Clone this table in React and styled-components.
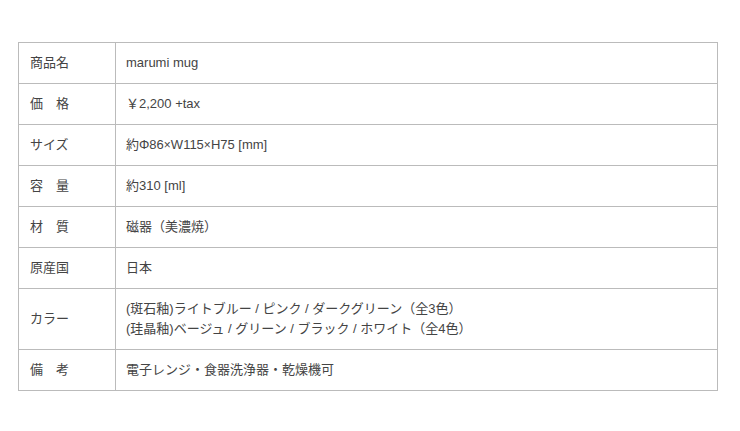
import React from 'react';
import styled, { createGlobalStyle } from 'styled-components';

const GlobalStyle = createGlobalStyle`
  body {
    margin: 0;
    background: #fff;
    font-family: 'Liberation Sans', 'Noto Sans CJK JP', sans-serif;
  }
`;

const Page = styled.div`
  padding: 42px 0 0 18px;
`;

const SpecTable = styled.table`
  width: 700px;
  border-collapse: collapse;
  font-size: 13px;
  line-height: 20px;
  color: #444;
`;

const Label = styled.th`
  width: 75px;
  padding: 10px 10px 10px 11px;
  border: 1px solid #bbb;
  font-weight: normal;
  text-align: left;
  vertical-align: middle;
  white-space: pre;
`;

const Value = styled.td`
  padding: 10px 10px;
  border: 1px solid #bbb;
  text-align: left;
  vertical-align: middle;
`;

const Times = styled.span`
  font-family: 'Liberation Sans', sans-serif;
  font-size: 12px;
  line-height: 0;
`;

const specs = [
  { label: '商品名', value: ['marumi mug'] },
  { label: '価　格', value: ['￥2,200 +tax'] },
  {
    label: 'サイズ',
    value: [
      <>
        約Φ86<Times>×</Times>W115<Times>×</Times>H75 [mm]
      </>,
    ],
  },
  { label: '容　量', value: ['約310 [ml]'] },
  { label: '材　質', value: ['磁器（美濃焼）'] },
  { label: '原産国', value: ['日本'] },
  {
    label: 'カラー',
    value: [
      '(斑石釉)ライトブルー / ピンク / ダークグリーン（全3色）',
      '(珪晶釉)ベージュ / グリーン / ブラック / ホワイト（全4色）',
    ],
  },
  { label: '備　考', value: ['電子レンジ・食器洗浄器・乾燥機可'] },
];

export default function App() {
  return (
    <Page>
      <GlobalStyle />
      <SpecTable>
        <tbody>
          {specs.map(row => (
            <tr key={row.label}>
              <Label>{row.label}</Label>
              <Value>
                {row.value.map((line, i) => (
                  <div key={i}>{line}</div>
                ))}
              </Value>
            </tr>
          ))}
        </tbody>
      </SpecTable>
    </Page>
  );
}
